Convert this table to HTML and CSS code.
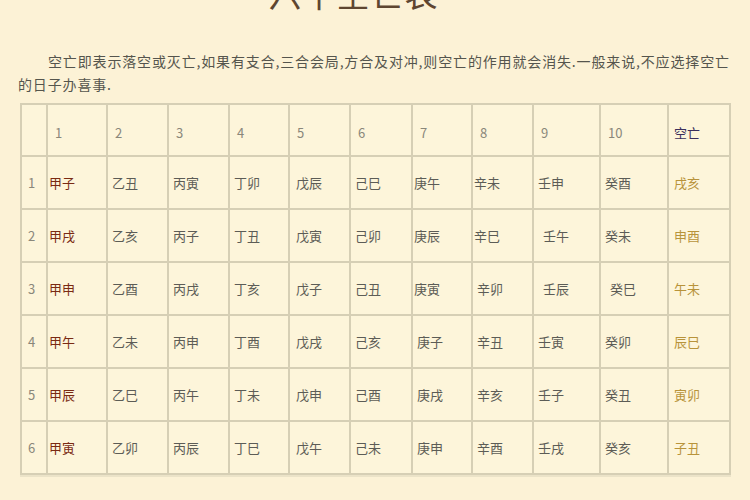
FILE: index.html
```html
<!DOCTYPE html>
<html lang="zh-CN">
<head>
<meta charset="utf-8">
<link rel="stylesheet" href="styles.css">
</head>
<body>
<div class="page">
  <h1 class="title">六十空亡表</h1>
  <p class="intro">空亡即表示落空或灭亡,如果有支合,三合会局,方合及对冲,则空亡的作用就会消失.一般来说,不应选择空亡的日子办喜事.</p>
  <table class="grid">
    <colgroup>
      <col class="c0"><col class="c1"><col class="c2"><col class="c3"><col class="c4"><col class="c5"><col class="c6"><col class="c7"><col class="c8"><col class="c9"><col class="c10"><col class="c11">
    </colgroup>
    <tr class="head">
      <td></td><td>1</td><td>2</td><td>3</td><td>4</td><td>5</td><td>6</td><td>7</td><td>8</td><td>9</td><td>10</td><td class="kw">空亡</td>
    </tr>
    <tr>
      <td class="num">1</td><td class="jia">甲子</td><td>乙丑</td><td>丙寅</td><td>丁卯</td><td class="wide">戊辰</td><td>己巳</td><td class="tight">庚午</td><td class="tight">辛未</td><td>壬申</td><td>癸酉</td><td class="kong">戌亥</td>
    </tr>
    <tr>
      <td class="num">2</td><td class="jia">甲戌</td><td>乙亥</td><td>丙子</td><td>丁丑</td><td class="wide">戊寅</td><td>己卯</td><td class="tight">庚辰</td><td class="tight">辛巳</td><td class="in">壬午</td><td>癸未</td><td class="kong">申酉</td>
    </tr>
    <tr>
      <td class="num">3</td><td class="jia">甲申</td><td>乙酉</td><td>丙戌</td><td>丁亥</td><td class="wide">戊子</td><td>己丑</td><td class="tight">庚寅</td><td>辛卯</td><td class="in">壬辰</td><td class="in">癸巳</td><td class="kong">午未</td>
    </tr>
    <tr>
      <td class="num">4</td><td class="jia">甲午</td><td>乙未</td><td>丙申</td><td>丁酉</td><td class="wide">戊戌</td><td>己亥</td><td>庚子</td><td>辛丑</td><td>壬寅</td><td>癸卯</td><td class="kong">辰巳</td>
    </tr>
    <tr>
      <td class="num">5</td><td class="jia">甲辰</td><td>乙巳</td><td>丙午</td><td>丁未</td><td class="wide">戊申</td><td>己酉</td><td>庚戌</td><td>辛亥</td><td>壬子</td><td>癸丑</td><td class="kong">寅卯</td>
    </tr>
    <tr>
      <td class="num">6</td><td class="jia">甲寅</td><td>乙卯</td><td>丙辰</td><td>丁巳</td><td class="wide">戊午</td><td>己未</td><td>庚申</td><td>辛酉</td><td>壬戌</td><td>癸亥</td><td class="kong">子丑</td>
    </tr>
  </table>
</div>
</body>
</html>
```

FILE: styles.css
```css
html, body {
  margin: 0;
  padding: 0;
  background: #fcf2d6;
}
body {
  font-family: "Noto Sans CJK SC", "DejaVu Sans", sans-serif;
  color: #5a5a52;
  overflow: hidden;
}
.page {
  display: flow-root;
  width: 750px;
  height: 500px;
  padding: 0 18px 0 20px;
  box-sizing: border-box;
}
.title {
  margin: -29px 0 0 0;
  padding-right: 45px;
  text-align: center;
  font-size: 33px;
  font-weight: normal;
  line-height: 44px;
  color: #5e4630;
  letter-spacing: 1px;
}
.intro {
  margin: 35px 0 0 -2px;
  font-size: 14px;
  line-height: 23px;
  letter-spacing: 0.85px;
  text-indent: 30px;
  color: #55554d;
}
.grid {
  margin-top: 7px;
  width: 709px;
  table-layout: fixed;
  border-collapse: collapse;
  border: 2px solid #d3ccb2;
  background: #fdf5da;
  font-size: 13px;
  box-shadow: 0 2px 0 #ebe3c8;
}
.grid td {
  border: 2px solid #d6cfb5;
  height: 51px;
  padding: 0 0 0 4px;
  color: #5c5c56;
  white-space: nowrap;
  vertical-align: middle;
}
.grid .head td {
  height: 46px;
  padding-left: 7px;
  padding-top: 4px;
  color: #8a877a;
}
.grid .head td.kw {
  color: #3b2f5c;
  padding-left: 5px;
}
.grid td.num {
  padding-left: 6px;
  color: #8a877a;
}
.grid td.jia {
  padding-left: 1px;
  color: #7a2a12;
}
.grid td.kong {
  padding-left: 5px;
  color: #b8933a;
}
.grid td.tight {
  padding-left: 1px;
}
.grid td.wide {
  padding-left: 6px;
}
.grid td.in {
  padding-left: 9px;
}
.c0 { width: 26px; }
.c1 { width: 60px; }
.c2 { width: 61px; }
.c3 { width: 61px; }
.c4 { width: 60px; }
.c5 { width: 61px; }
.c6 { width: 62px; }
.c7 { width: 60px; }
.c8 { width: 61px; }
.c9 { width: 67px; }
.c10 { width: 68px; }
.c11 { width: 62px; }
```
